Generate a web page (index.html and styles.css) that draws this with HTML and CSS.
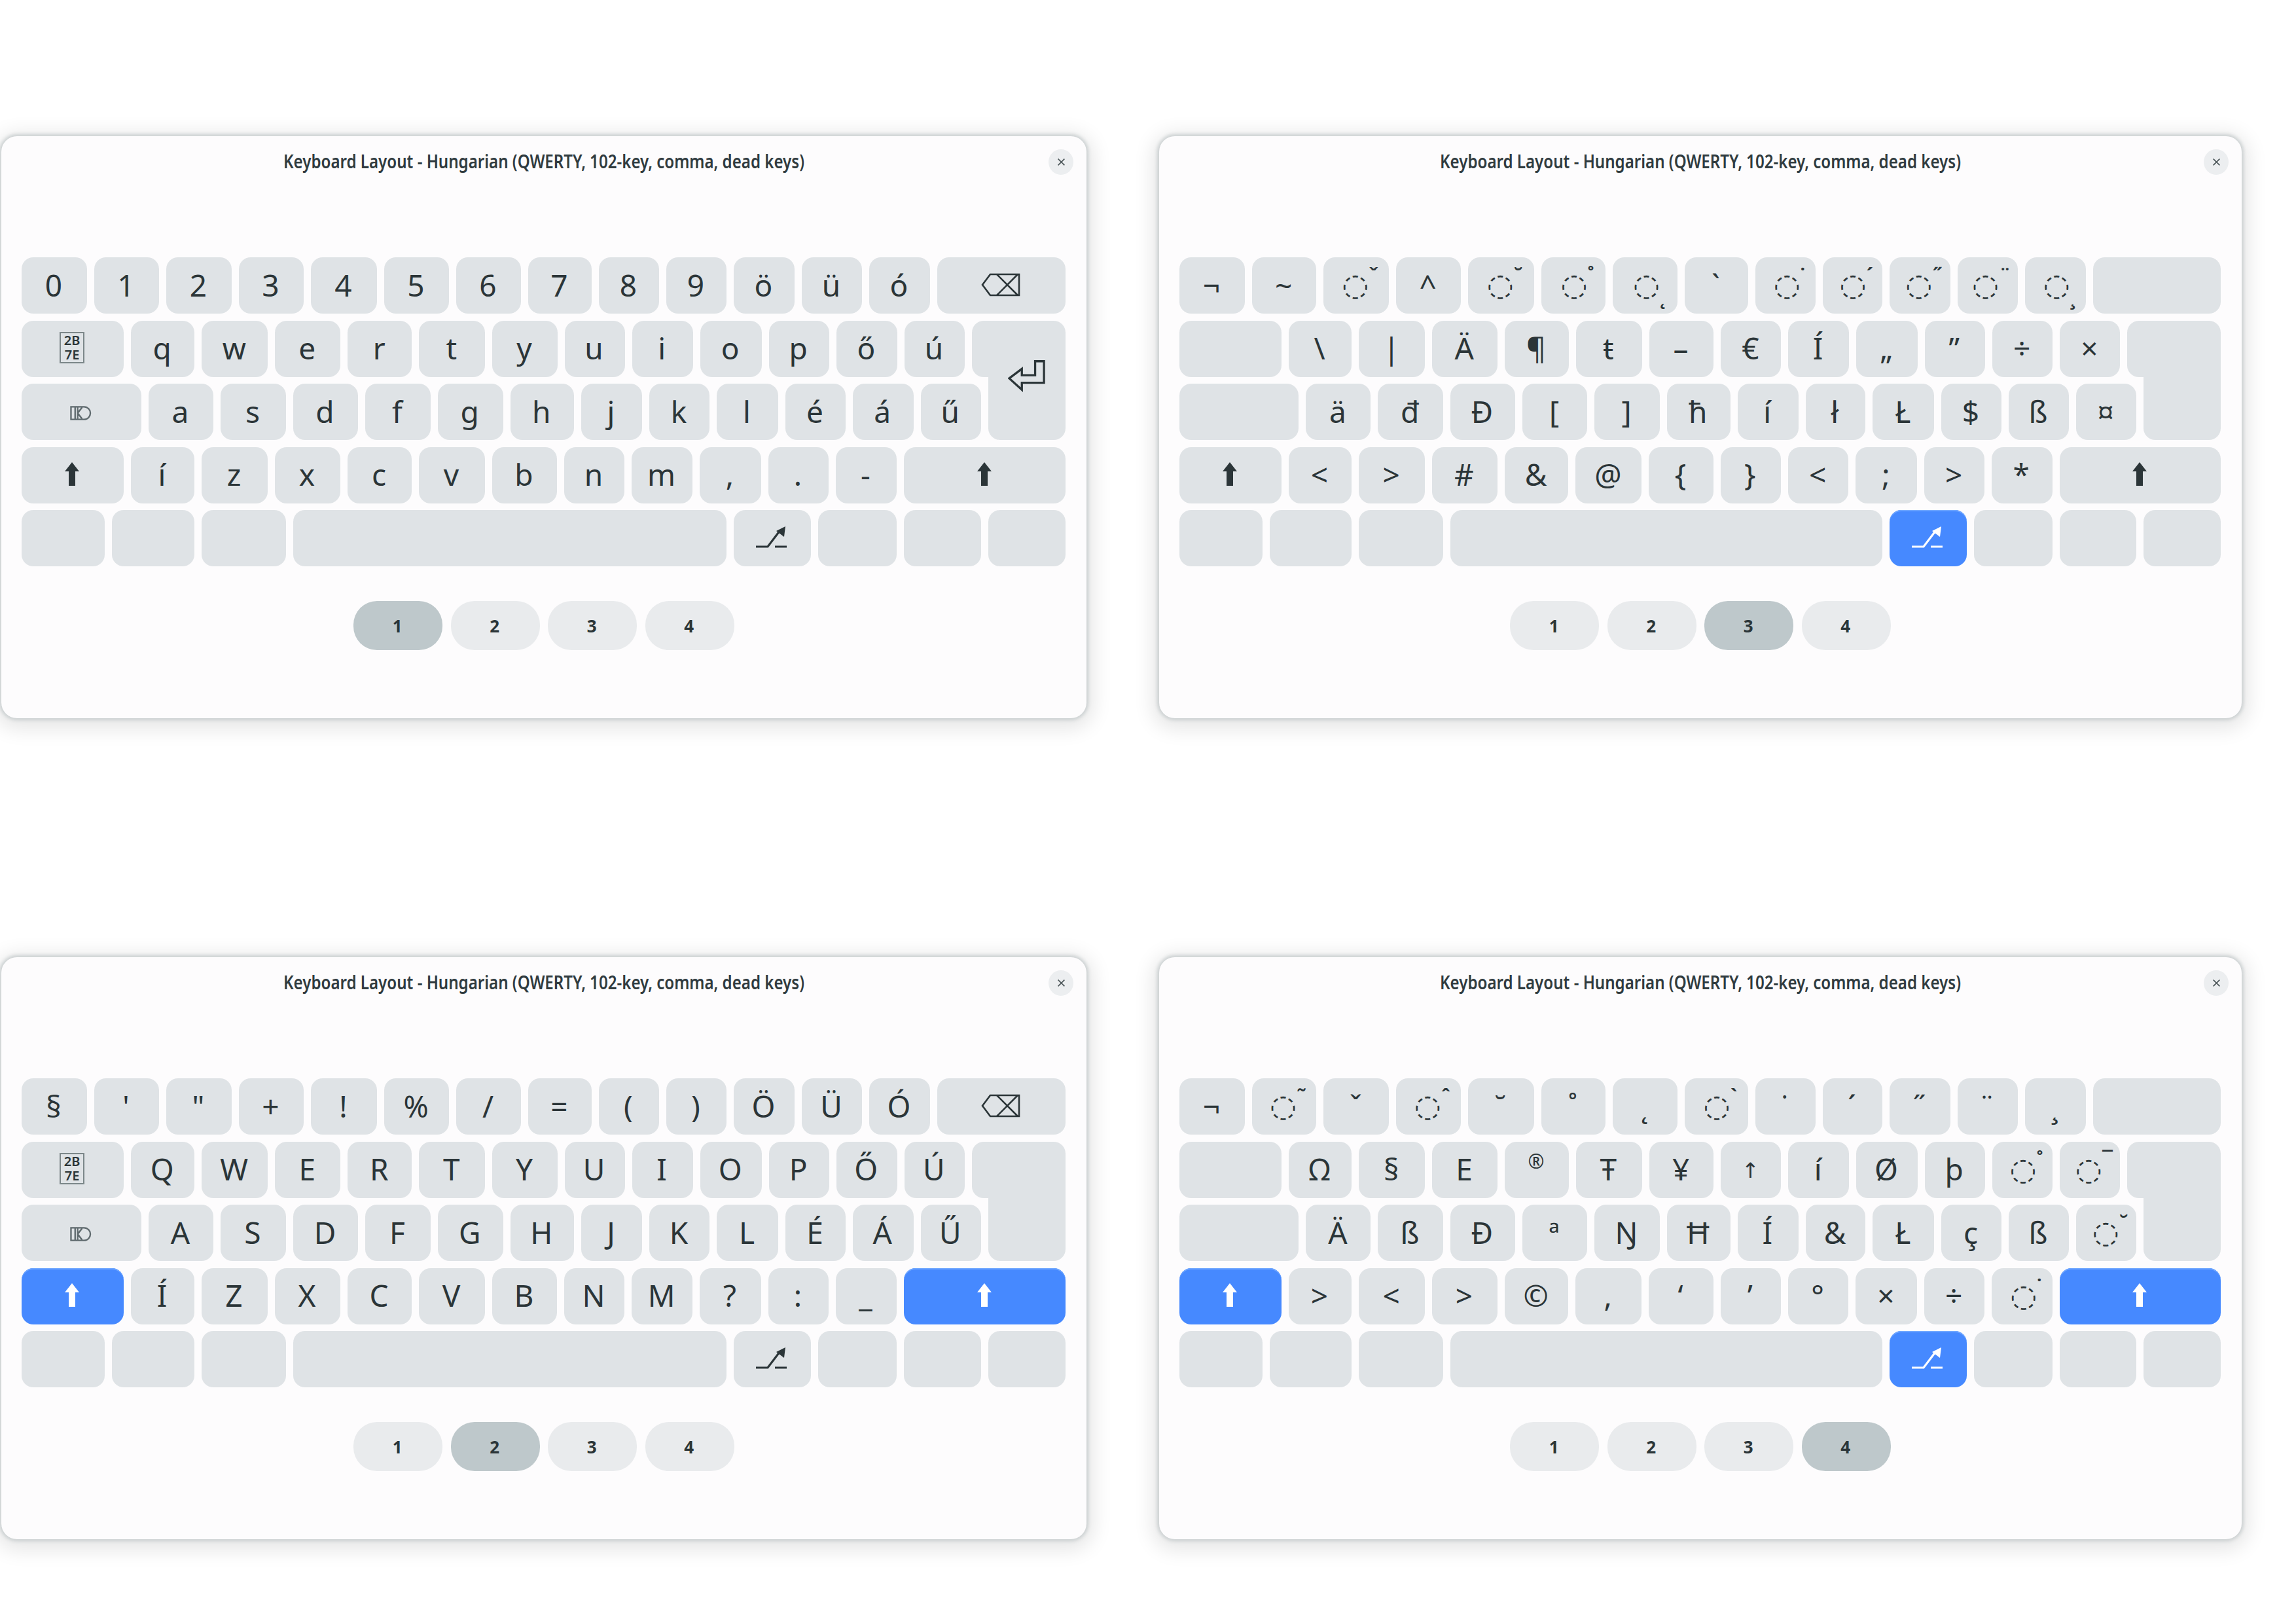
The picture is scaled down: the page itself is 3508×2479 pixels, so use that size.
FILE: index.html
```html
<!DOCTYPE html>
<html lang="en">
<head>
    <meta charset="UTF-8">
    <title>Keyboard Layout - Hungarian</title>
    <link rel="stylesheet" href="styles.css">
</head>
<body>
    <svg class="sprite" xmlns="http://www.w3.org/2000/svg">
        <symbol id="i-shift" viewBox="0 0 24 36">
            <path d="M12 0 L23 14 H17 V36 H7 V14 H1 Z" fill="currentColor"/>
        </symbol>
        <symbol id="i-back" viewBox="0 0 60 36">
            <path d="M58 2 H14 L2 18 L14 34 H58 Z M24 2 L56 34 M56 2 L24 34" fill="none" stroke="currentColor" stroke-width="2.6"/>
        </symbol>
        <symbol id="i-enter" viewBox="0 0 60 50">
            <path d="M43 2 H57 V36 H22 V47 L2 29 L22 14 V24 H43 Z" fill="none" stroke="currentColor" stroke-width="3.4"/>
        </symbol>
        <symbol id="i-alt" viewBox="0 0 48 36">
            <path d="M0 32 H18 L37 7 M29 32 H47" fill="none" stroke="currentColor" stroke-width="3.2"/>
            <path d="M31 8 L45 1 L43 17 Z" fill="currentColor"/>
        </symbol>
        <symbol id="i-caps" viewBox="0 0 34 24">
            <path d="M1.5 2 H22 C28 2 32 7 32 12 C32 17 28 22 22 22 H1.5 Z M8 2 V22 M12 2 V22 M12 12 L19 3 M12 12 L19 21" fill="none" stroke="#5f6a6e" stroke-width="2.4"/>
        </symbol>
        <symbol id="i-close" viewBox="0 0 16 16">
            <path d="M2 2 L14 14 M14 2 L2 14" fill="none" stroke="currentColor" stroke-width="2"/>
        </symbol>
    </svg>

    <div class="sheet">
        <!-- level 1 -->
        <section class="window">
            <header class="titlebar">
                <h1 class="title">Keyboard Layout - Hungarian (QWERTY, 102-key, comma, dead keys)</h1>
                <span class="close"><svg class="icon-close"><use href="#i-close"/></svg></span>
            </header>
            <div class="keyboard">
                <div class="row row-1">
                    <div class="key">0</div><div class="key">1</div><div class="key">2</div><div class="key">3</div><div class="key">4</div><div class="key">5</div><div class="key">6</div><div class="key">7</div><div class="key">8</div><div class="key">9</div><div class="key">ö</div><div class="key">ü</div><div class="key">ó</div>
                    <div class="key"><svg class="icon-back"><use href="#i-back"/></svg></div>
                </div>
                <div class="row row-2">
                    <div class="key"><span class="tofu">2B<br>7E</span></div>
                    <div class="key">q</div><div class="key">w</div><div class="key">e</div><div class="key">r</div><div class="key">t</div><div class="key">y</div><div class="key">u</div><div class="key">i</div><div class="key">o</div><div class="key">p</div><div class="key">ő</div><div class="key">ú</div>
                    <div class="key enter-top"></div>
                </div>
                <div class="row row-3">
                    <div class="key"><svg class="icon-caps"><use href="#i-caps"/></svg></div>
                    <div class="key">a</div><div class="key">s</div><div class="key">d</div><div class="key">f</div><div class="key">g</div><div class="key">h</div><div class="key">j</div><div class="key">k</div><div class="key">l</div><div class="key">é</div><div class="key">á</div><div class="key">ű</div>
                    <div class="key enter-bottom"><svg class="icon-enter"><use href="#i-enter"/></svg></div>
                </div>
                <div class="row row-4">
                    <div class="key"><svg class="icon-shift"><use href="#i-shift"/></svg></div>
                    <div class="key">í</div><div class="key">z</div><div class="key">x</div><div class="key">c</div><div class="key">v</div><div class="key">b</div><div class="key">n</div><div class="key">m</div><div class="key">,</div><div class="key">.</div><div class="key">-</div>
                    <div class="key"><svg class="icon-shift"><use href="#i-shift"/></svg></div>
                </div>
                <div class="row row-5">
                    <div class="key"></div><div class="key"></div><div class="key"></div><div class="key"></div>
                    <div class="key"><svg class="icon-alt"><use href="#i-alt"/></svg></div>
                    <div class="key"></div><div class="key"></div><div class="key"></div>
                </div>
            </div>
            <nav class="pager">
                <span class="page active">1</span><span class="page">2</span><span class="page">3</span><span class="page">4</span>
            </nav>
        </section>

        <!-- level 3 -->
        <section class="window">
            <header class="titlebar">
                <h1 class="title">Keyboard Layout - Hungarian (QWERTY, 102-key, comma, dead keys)</h1>
                <span class="close"><svg class="icon-close"><use href="#i-close"/></svg></span>
            </header>
            <div class="keyboard">
                <div class="row row-1">
                    <div class="key">¬</div><div class="key">~</div><div class="key dead"><span>◌</span><i>ˇ</i></div><div class="key">^</div><div class="key dead"><span>◌</span><i>˘</i></div><div class="key dead"><span>◌</span><i>˚</i></div><div class="key dead"><span>◌</span><i class="low">˛</i></div><div class="key">`</div><div class="key dead"><span>◌</span><i>˙</i></div><div class="key dead"><span>◌</span><i>´</i></div><div class="key dead"><span>◌</span><i>˝</i></div><div class="key dead"><span>◌</span><i>¨</i></div><div class="key dead"><span>◌</span><i class="low">¸</i></div>
                    <div class="key"></div>
                </div>
                <div class="row row-2">
                    <div class="key"></div>
                    <div class="key">\</div><div class="key">|</div><div class="key">Ä</div><div class="key">¶</div><div class="key">ŧ</div><div class="key">–</div><div class="key">€</div><div class="key">Í</div><div class="key">„</div><div class="key">”</div><div class="key">÷</div><div class="key">×</div>
                    <div class="key enter-top"></div>
                </div>
                <div class="row row-3">
                    <div class="key"></div>
                    <div class="key">ä</div><div class="key">đ</div><div class="key">Đ</div><div class="key">[</div><div class="key">]</div><div class="key">ħ</div><div class="key">í</div><div class="key">ł</div><div class="key">Ł</div><div class="key">$</div><div class="key">ß</div><div class="key">¤</div>
                    <div class="key enter-bottom"></div>
                </div>
                <div class="row row-4">
                    <div class="key"><svg class="icon-shift"><use href="#i-shift"/></svg></div>
                    <div class="key">&lt;</div><div class="key">&gt;</div><div class="key">#</div><div class="key">&amp;</div><div class="key">@</div><div class="key">{</div><div class="key">}</div><div class="key">&lt;</div><div class="key">;</div><div class="key">&gt;</div><div class="key">*</div>
                    <div class="key"><svg class="icon-shift"><use href="#i-shift"/></svg></div>
                </div>
                <div class="row row-5">
                    <div class="key"></div><div class="key"></div><div class="key"></div><div class="key"></div>
                    <div class="key on"><svg class="icon-alt"><use href="#i-alt"/></svg></div>
                    <div class="key"></div><div class="key"></div><div class="key"></div>
                </div>
            </div>
            <nav class="pager">
                <span class="page">1</span><span class="page">2</span><span class="page active">3</span><span class="page">4</span>
            </nav>
        </section>

        <!-- level 2 -->
        <section class="window">
            <header class="titlebar">
                <h1 class="title">Keyboard Layout - Hungarian (QWERTY, 102-key, comma, dead keys)</h1>
                <span class="close"><svg class="icon-close"><use href="#i-close"/></svg></span>
            </header>
            <div class="keyboard">
                <div class="row row-1">
                    <div class="key">§</div><div class="key">'</div><div class="key">"</div><div class="key">+</div><div class="key">!</div><div class="key">%</div><div class="key">/</div><div class="key">=</div><div class="key">(</div><div class="key">)</div><div class="key">Ö</div><div class="key">Ü</div><div class="key">Ó</div>
                    <div class="key"><svg class="icon-back"><use href="#i-back"/></svg></div>
                </div>
                <div class="row row-2">
                    <div class="key"><span class="tofu">2B<br>7E</span></div>
                    <div class="key">Q</div><div class="key">W</div><div class="key">E</div><div class="key">R</div><div class="key">T</div><div class="key">Y</div><div class="key">U</div><div class="key">I</div><div class="key">O</div><div class="key">P</div><div class="key">Ő</div><div class="key">Ú</div>
                    <div class="key enter-top"></div>
                </div>
                <div class="row row-3">
                    <div class="key"><svg class="icon-caps"><use href="#i-caps"/></svg></div>
                    <div class="key">A</div><div class="key">S</div><div class="key">D</div><div class="key">F</div><div class="key">G</div><div class="key">H</div><div class="key">J</div><div class="key">K</div><div class="key">L</div><div class="key">É</div><div class="key">Á</div><div class="key">Ű</div>
                    <div class="key enter-bottom"></div>
                </div>
                <div class="row row-4">
                    <div class="key on"><svg class="icon-shift"><use href="#i-shift"/></svg></div>
                    <div class="key">Í</div><div class="key">Z</div><div class="key">X</div><div class="key">C</div><div class="key">V</div><div class="key">B</div><div class="key">N</div><div class="key">M</div><div class="key">?</div><div class="key">:</div><div class="key">_</div>
                    <div class="key on"><svg class="icon-shift"><use href="#i-shift"/></svg></div>
                </div>
                <div class="row row-5">
                    <div class="key"></div><div class="key"></div><div class="key"></div><div class="key"></div>
                    <div class="key"><svg class="icon-alt"><use href="#i-alt"/></svg></div>
                    <div class="key"></div><div class="key"></div><div class="key"></div>
                </div>
            </div>
            <nav class="pager">
                <span class="page">1</span><span class="page active">2</span><span class="page">3</span><span class="page">4</span>
            </nav>
        </section>

        <!-- level 4 -->
        <section class="window">
            <header class="titlebar">
                <h1 class="title">Keyboard Layout - Hungarian (QWERTY, 102-key, comma, dead keys)</h1>
                <span class="close"><svg class="icon-close"><use href="#i-close"/></svg></span>
            </header>
            <div class="keyboard">
                <div class="row row-1">
                    <div class="key">¬</div><div class="key dead"><span>◌</span><i>˜</i></div><div class="key">ˇ</div><div class="key dead"><span>◌</span><i>ˆ</i></div><div class="key">˘</div><div class="key">˚</div><div class="key">˛</div><div class="key dead"><span>◌</span><i>ˋ</i></div><div class="key">˙</div><div class="key">´</div><div class="key">˝</div><div class="key">¨</div><div class="key">¸</div>
                    <div class="key"></div>
                </div>
                <div class="row row-2">
                    <div class="key"></div>
                    <div class="key">Ω</div><div class="key">§</div><div class="key">E</div><div class="key"><span class="raised">®</span></div><div class="key">Ŧ</div><div class="key">¥</div><div class="key"><span class="small">↑</span></div><div class="key">í</div><div class="key">Ø</div><div class="key">þ</div><div class="key dead"><span>◌</span><i>˚</i></div><div class="key dead"><span>◌</span><i>¯</i></div>
                    <div class="key enter-top"></div>
                </div>
                <div class="row row-3">
                    <div class="key"></div>
                    <div class="key">Ä</div><div class="key">ß</div><div class="key">Đ</div><div class="key">ª</div><div class="key">Ŋ</div><div class="key">Ħ</div><div class="key">Í</div><div class="key">&amp;</div><div class="key">Ł</div><div class="key">ç</div><div class="key">ß</div><div class="key dead"><span>◌</span><i>˘</i></div>
                    <div class="key enter-bottom"></div>
                </div>
                <div class="row row-4">
                    <div class="key on"><svg class="icon-shift"><use href="#i-shift"/></svg></div>
                    <div class="key">&gt;</div><div class="key">&lt;</div><div class="key">&gt;</div><div class="key">©</div><div class="key">‚</div><div class="key">‘</div><div class="key">’</div><div class="key">°</div><div class="key">×</div><div class="key">÷</div><div class="key dead"><span>◌</span><i>˙</i></div>
                    <div class="key on"><svg class="icon-shift"><use href="#i-shift"/></svg></div>
                </div>
                <div class="row row-5">
                    <div class="key"></div><div class="key"></div><div class="key"></div><div class="key"></div>
                    <div class="key on"><svg class="icon-alt"><use href="#i-alt"/></svg></div>
                    <div class="key"></div><div class="key"></div><div class="key"></div>
                </div>
            </div>
            <nav class="pager">
                <span class="page">1</span><span class="page">2</span><span class="page">3</span><span class="page active">4</span>
            </nav>
        </section>
    </div>
</body>
</html>
```

FILE: styles.css
```css
body {
    margin: 0;
    background-color: #ffffff;
    color: #2b3538;
    font-family: "Noto Sans", "DejaVu Sans", sans-serif;
}

.sprite {
    display: none;
}

.sheet {
    display: grid;
    grid-template-columns: 1658px 1654px;
    grid-template-rows: 889px 889px;
    column-gap: 111px;
    row-gap: 365px;
    padding: 208px 0 128px 2px;
}

.window {
    display: flex;
    flex-direction: column;
    background-color: #fdfcfd;
    border-radius: 24px;
    box-shadow: 0 0 5px 3px #ccd1d2, 0 6px 30px 10px rgba(0, 0, 0, 0.1);
}

.titlebar {
    display: grid;
    grid-template-columns: 38px 1fr 38px;
    align-items: center;
    padding: 20px 20px 0;
}

.title {
    grid-column: 2;
    margin: -3px 0 0;
    font-size: 28px;
    font-weight: 600;
    line-height: 39px;
    text-align: center;
    white-space: nowrap;
    color: #303b3f;
    transform: scaleX(0.861);
}

.close {
    grid-column: 3;
    display: flex;
    align-items: center;
    justify-content: center;
    height: 39px;
    border-radius: 50%;
    background-color: #eceef0;
    color: #4d575a;
}

.icon-close {
    width: 15px;
    height: 13px;
}

.keyboard {
    display: flex;
    flex-direction: column;
    gap: 10.5px;
    margin: 126px 32px 0 31px;
}

.row {
    display: grid;
    column-gap: 11px;
    height: 86px;
}

.row-1 {
    grid-template-columns: 100fr 99fr 100fr 99fr 101fr 99fr 99fr 97fr 92fr 92fr 93fr 92fr 93fr 196fr;
}

.row-2 {
    grid-template-columns: 156fr 97fr 101fr 100fr 98fr 101fr 99fr 92fr 93fr 94fr 92fr 93fr 92fr 143fr;
}

.row-3 {
    grid-template-columns: 183fr 99fr 100fr 99fr 100fr 99.5fr 97.5fr 93fr 92fr 94fr 92fr 92.5fr 92.5fr 118fr;
}

.row-4 {
    grid-template-columns: 156fr 97fr 101fr 100fr 98fr 101fr 99fr 92fr 93fr 94fr 92fr 93fr 247fr;
}

.row-5 {
    grid-template-columns: 127fr 126fr 129fr 662fr 118fr 120fr 118fr 118fr;
}

.key {
    display: flex;
    align-items: center;
    justify-content: center;
    min-width: 0;
    padding: 0 2px 3px 0;
    border-radius: 18px;
    background-color: #dfe3e6;
    font-size: 46px;
    line-height: 1;
    color: #2b3538;
}

.key.on {
    background-color: #4689ff;
    box-shadow: inset 0 2px 0 #6fa6ff;
    color: #ffffff;
}

/* enter is two pieces that meet across the row gap */
.enter-top {
    border-bottom-right-radius: 0;
}

.enter-bottom {
    position: relative;
    margin-top: -11px;
    border-top-left-radius: 0;
    border-top-right-radius: 0;
}

.icon-enter {
    position: absolute;
    top: -26px;
    left: 30px;
    width: 58px;
    height: 50px;
    color: #2b3538;
}

.key.dead {
    padding-left: 14px;
}

.dead span {
    font-family: "DejaVu Sans", sans-serif;
    font-size: 47px;
}

.dead i {
    align-self: flex-start;
    margin-top: 12px;
    font-size: 32px;
    font-weight: 600;
    font-style: normal;
    line-height: 1;
}

.dead i.low {
    margin-top: 44px;
}

.raised {
    margin-bottom: 22px;
    font-size: 30px;
}

.small {
    margin-top: 4px;
    font-size: 32px;
}

.tofu {
    padding: 0 5px;
    border: 2px solid #7c8789;
    font-size: 20px;
    font-weight: 600;
    line-height: 22px;
    text-align: center;
}

.icon-caps {
    width: 33px;
    height: 24px;
    margin-top: 6px;
}

.icon-shift {
    width: 24px;
    height: 36px;
}

.icon-back {
    width: 60px;
    height: 36px;
}

.icon-alt {
    width: 48px;
    height: 36px;
}

.pager {
    display: flex;
    justify-content: center;
    gap: 12.5px;
    margin-top: 53px;
}

.page {
    display: flex;
    align-items: center;
    justify-content: center;
    width: 136px;
    height: 75px;
    padding-right: 2px;
    box-sizing: border-box;
    border-radius: 36px;
    background-color: #e9ebed;
    font-size: 26px;
    font-weight: 700;
    color: #2b3538;
}

.page.active {
    background-color: #bec8cb;
}
```
